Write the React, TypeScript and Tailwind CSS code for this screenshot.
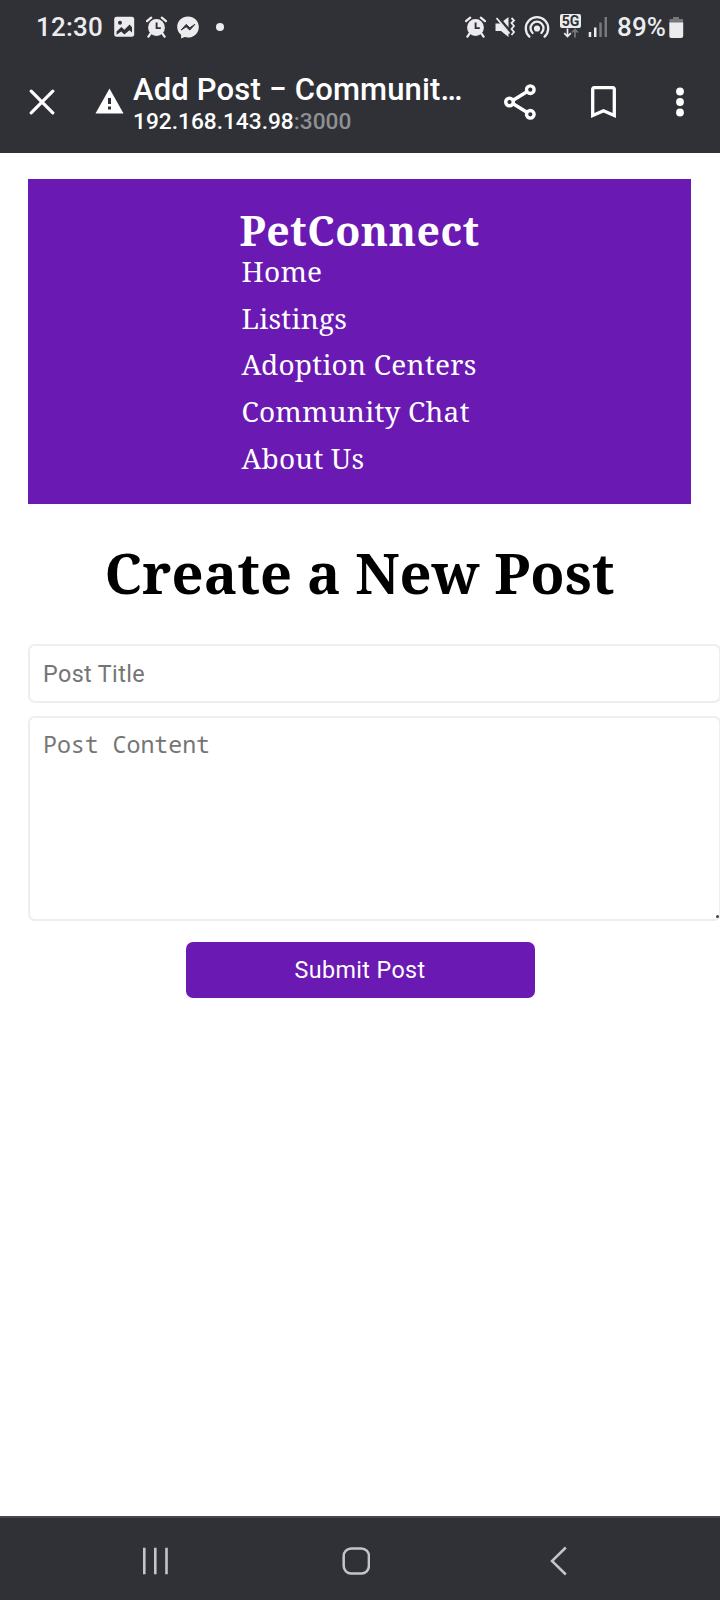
import type { ReactNode } from "react";

function AlarmIcon({ className }: { className: string }) {
  return (
    <svg className={className} width="21" height="22" viewBox="0 0 21 22" fill="none">
      <circle cx="10.5" cy="11.5" r="8.4" fill="#ececee" />
      <path d="M1 5.2 5.2 1.6M20 5.2 15.8 1.6M4.6 17.5 2.4 20.6M16.4 17.5l2.2 3.1" stroke="#ececee" strokeWidth="2.2" strokeLinecap="round" />
      <path d="M10.6 6.5v5.6h4.2" stroke="#303136" strokeWidth="1.9" />
    </svg>
  );
}

function StatusBar() {
  return (
    <div className="flex h-[54px] items-center text-[26px] font-medium leading-[30px] text-[#ececee]">
      <span className="ml-[36px] w-[78px] tracking-[0.2px]">12:30</span>
      <svg width="21" height="22" viewBox="0 0 21 22">
        <rect x="0.2" y="0.8" width="20" height="20" rx="2.4" fill="#ececee" />
        <circle cx="6" cy="6.8" r="2" fill="#303136" />
        <path d="M2.6 15.4 7.4 11l3 2.8 5.2-5.2 2.4 2.6v5.2l-2.6-2.2-5 4.2-3.2-3-4.6 3.4z" fill="#303136" />
      </svg>
      <AlarmIcon className="ml-[11px]" />
      <svg className="ml-[10px]" width="22" height="23" viewBox="0 0 22 23">
        <path d="M11 .4C4.9.4.2 4.9.2 10.9c0 3.300 1.500 6 3.900 7.900v3.600l3.500-1.300c1.100.3 2.200.4 3.400.4 6.100 0 10.800-4.500 10.800-10.600S17.100.4 11 .4z" fill="#ececee" />
        <path d="m4.200 14 5-5.600 3.600 3.400 5-3.400-5 5.600-3.600-3.200z" fill="#303136" stroke="#303136" strokeWidth="1" strokeLinejoin="round" />
      </svg>
      <span className="ml-[17px] size-2 rounded-full bg-[#ececee]" />
      <AlarmIcon className="ml-[241px]" />
      <svg className="ml-[9px]" width="21" height="22" viewBox="0 0 21 22" fill="none">
        <path d="M.5 7.500h4.500L13.500 1v20L6 15H.5z" fill="#ececee" />
        <path d="M2.500 1 15 16" stroke="#303136" strokeWidth="3.600" />
        <path d="m1.500 2 13 15.500" stroke="#ececee" strokeWidth="1.800" />
        <path d="m16.500 2 2.500 2.500-2.500 2.500 2.500 3-2.500 3 2.500 3-2.500 3" stroke="#ececee" strokeWidth="1.800" />
      </svg>
      <svg className="ml-[8px]" width="26" height="24" viewBox="0 0 26 24" fill="none" stroke="#ececee" strokeWidth="2.300" strokeLinecap="round">
        <circle cx="13" cy="13.500" r="3.100" fill="#ececee" stroke="none" />
        <path d="M5.400 21.600a11.200 11.200 0 1 1 15.200 0" />
        <path d="M8.600 18a6.500 6.500 0 1 1 8.800 0" />
      </svg>
      <div className="ml-[10px] flex w-[21px] flex-col items-center pb-[3px]">
        <span className="h-[14px] w-[21px] rounded-[2px] bg-[#ececee] text-center text-[14px] font-bold leading-[15px] text-[#303136]">5G</span>
        <svg width="16" height="10" viewBox="0 0 16 10" fill="none" strokeWidth="1.700">
          <path d="M4.500.5v8M1.200 5.200l3.300 3.300 3.300-3.300" stroke="#ececee" />
          <path d="M12 9.500v-8M9 4.500l3-3 3 3" stroke="#77787c" />
        </svg>
      </div>
      <svg className="ml-[7px]" width="20" height="22" viewBox="0 0 20 22">
        <path d="M.7 16h2.500v5H.7zM6 11.500h2.500V21H6z" fill="#ececee" />
        <path d="M11.300 6.500h2.500V21h-2.500zM16.500 1H19v20h-2.500z" fill="#77787c" />
      </svg>
      <span className="ml-[9px] w-[52px] tracking-[0.1px]">89%</span>
      <svg width="15" height="23" viewBox="0 0 15 23">
        <path d="M4 1h6v2h4v4H.5V3H4z" fill="#77787c" />
        <path d="M.3 6.500h13.900V20a2 2 0 0 1-2 2H2.300a2 2 0 0 1-2-2z" fill="#ececee" />
      </svg>
    </div>
  );
}

function BrowserBar() {
  return (
    <div className="flex h-[99px] items-center pb-[3px] text-white">
      <svg className="ml-[29px]" width="26" height="26" viewBox="0 0 26 26" stroke="white" strokeWidth="3.200" strokeLinecap="round">
        <path d="m2.200 2.200 21.600 21.600M23.800 2.200 2.200 23.800" />
      </svg>
      <svg className="mb-[2px] ml-[40px]" width="29" height="26" viewBox="0 0 29 26">
        <path d="M14.500.5 28.500 25.500H.5z" fill="white" />
        <path d="M13 10h3v6h-3zM13 18.500h3v3h-3z" fill="#303136" />
      </svg>
      <div className="ml-[9px] w-[340px] whitespace-nowrap pt-[4px] font-medium">
        <div className="text-[31px] leading-[36px] tracking-[0.16px]">
          Add Post <span className="-mx-px inline-block scale-x-[0.84]">–</span> Communit…
        </div>
        <div className="text-[22.700px] leading-[28px]">
          192.168.143.98<span className="text-[#8f9094]">:3000</span>
        </div>
      </div>
      <svg className="ml-[30px]" width="34" height="36" viewBox="0 0 34 36" fill="none" stroke="white" strokeWidth="3.400">
        <path d="M10.500 16 23.500 8M10.500 20l13 8" />
        <circle cx="6.500" cy="18" r="3.800" />
        <circle cx="27.300" cy="5.700" r="3.800" />
        <circle cx="27.300" cy="30.300" r="3.800" />
      </svg>
      <svg className="ml-[54px]" width="25" height="32" viewBox="0 0 25 32" fill="none" stroke="white" strokeWidth="3.300">
        <path d="M1.700 29.400V3a1.300 1.300 0 0 1 1.300-1.300h19A1.300 1.300 0 0 1 23.300 3v26.400L12.500 24.700z" />
      </svg>
      <svg className="ml-[60px]" width="8" height="30" viewBox="0 0 8 30" fill="white">
        <circle cx="4" cy="4.500" r="3.900" />
        <circle cx="4" cy="15" r="3.900" />
        <circle cx="4" cy="25.500" r="3.900" />
      </svg>
    </div>
  );
}

function NavItem({ children }: { children: ReactNode }) {
  return <li className="h-[46.700px] leading-[38px]">{children}</li>;
}

function SiteHeader() {
  return (
    <header className="ml-[28px] mt-[26px] flex h-[325px] w-[663px] flex-col items-center bg-[#6a19b3] pt-[29px] font-['Noto_Serif',serif] text-white">
      <div className="w-[240px] whitespace-nowrap">
        <div className="h-[44px] text-[41px] font-bold leading-[44px] tracking-[0.5px]">PetConnect</div>
        <ul className="ml-[2px] text-[28px] tracking-[0.26px]">
          <NavItem>Home</NavItem>
          <NavItem>Listings</NavItem>
          <NavItem>Adoption Centers</NavItem>
          <NavItem>Community Chat</NavItem>
          <NavItem>About Us</NavItem>
        </ul>
      </div>
    </header>
  );
}

export default function App() {
  return (
    <div className="flex h-[1600px] w-[720px] flex-col overflow-hidden bg-white font-['Roboto',sans-serif]">
      <div className="h-[153px] shrink-0 bg-[#303136]">
        <StatusBar />
        <BrowserBar />
      </div>
      <main className="flex-1">
        <SiteHeader />
        <h1 className="mt-[32px] h-[108px] whitespace-nowrap pr-px text-center font-['Noto_Serif',serif] text-[56px] font-bold leading-[72px] tracking-[0.1px] text-black">
          Create a New Post
        </h1>
        <form className="ml-[28px] w-[693px]">
          <input
            className="block h-[59px] w-full rounded-[7px] border-2 border-[#eeeeee] px-[13px] text-[23.300px] tracking-[0.4px] outline-none placeholder:text-[#757575]"
            placeholder="Post Title"
          />
          <div className="relative mt-[13px]">
            <textarea
              className="block h-[205px] w-full resize-none rounded-[7px] border-2 border-[#eeeeee] px-[13px] py-[12px] font-['Noto_Sans_Mono',monospace] text-[23.300px] leading-[28px] tracking-[-0.06px] outline-none placeholder:text-[#757575]"
              placeholder="Post Content"
            />
            <span className="absolute bottom-[3px] right-[2px] size-[3px] rounded-full bg-[#444444]" />
          </div>
          <button type="button" className="ml-[157.500px] mt-[21px] block h-[56px] w-[349px] rounded-[7px] bg-[#6a19b3] text-[23.300px] tracking-[0.4px] text-white">
            Submit Post
          </button>
        </form>
      </main>
      <nav className="flex h-[84px] shrink-0 items-center border-t-2 border-[#47484c] bg-[#303136] pt-[3px]">
        <svg className="ml-[142px]" width="27" height="28" viewBox="0 0 27 28" stroke="#c5c5c9" strokeWidth="2.600">
          <path d="M2.300.7v26.600M13.300.7v26.600M24.500.7v26.600" />
        </svg>
        <svg className="ml-[173px]" width="28" height="28" viewBox="0 0 28 28" fill="none" stroke="#c5c5c9" strokeWidth="2.500">
          <rect x="1.700" y="1.400" width="25.200" height="25.200" rx="7.500" />
        </svg>
        <svg className="ml-[179px]" width="18" height="30" viewBox="0 0 18 30" fill="none" stroke="#c5c5c9" strokeWidth="2.500">
          <path d="M16.800 1.500 3 15l13.800 13.500" />
        </svg>
      </nav>
    </div>
  );
}
